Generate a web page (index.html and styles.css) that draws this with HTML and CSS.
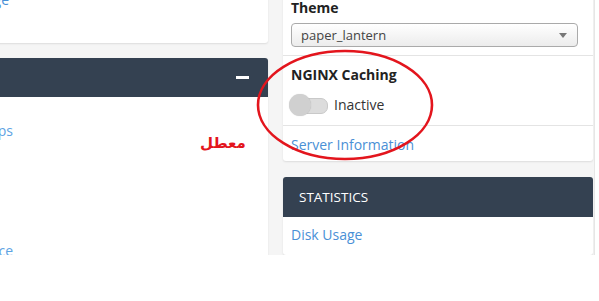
FILE: index.html
```html
<!DOCTYPE html>
<html lang="en">

<head>
  <meta charset="UTF-8">
  <meta name="viewport" content="width=device-width, initial-scale=1.0">
  <title>cPanel - General Information</title>
  <link rel="stylesheet" href="styles.css">
</head>

<body>
  <div class="page">
    <!-- Left column: tool groups -->
    <div class="col col-left">
      <div class="card card-top">
        <div class="item"><a href="#" class="link">Disk Usage</a></div>
      </div>

      <div class="panel panel-left">
        <div class="panel-heading">
          <span class="collapse-icon"></span>
        </div>
        <div class="panel-body tools">
          <div class="item"><a href="#" class="link link-light">Apps</a></div>
          <div class="item"><a href="#" class="link link-light">Workspace</a></div>
        </div>
      </div>
    </div>

    <!-- Right column: general information + statistics -->
    <div class="col col-right">
      <div class="card info">
        <div class="info-row">
          <label class="info-label">Theme</label>
          <div class="select">
            <span>paper_lantern</span>
            <span class="select-arrow"></span>
          </div>
        </div>
        <div class="info-row">
          <div class="info-label">NGINX Caching</div>
          <div class="toggle-row">
            <span class="toggle"><span class="toggle-knob"></span></span>
            <span class="toggle-text">Inactive</span>
          </div>
        </div>
        <div class="info-row info-last">
          <a href="#" class="link">Server Information</a>
        </div>
      </div>

      <div class="panel panel-stats">
        <div class="panel-heading">
          <span class="panel-title">Statistics</span>
        </div>
        <div class="panel-body stats">
          <a href="#" class="link">Disk Usage</a>
        </div>
      </div>
    </div>
  </div>

  <!-- Annotation drawn over the screenshot -->
  <div class="note" lang="ar" dir="rtl">معطل</div>
  <svg class="circle-mark" width="200" height="130" viewBox="0 0 200 130">
    <ellipse cx="89" cy="56" rx="87" ry="54" fill="none" stroke="#e3151d" stroke-width="2.6" />
  </svg>
</body>

</html>
```

FILE: styles.css
```css
/* General Reset */
* {
  margin: 0;
  padding: 0;
  box-sizing: border-box;
}

body {
  font-family: 'Open Sans', 'Noto Sans', sans-serif;
  font-size: 14px;
  line-height: 20px;
  color: #333;
  background-color: #fff;
  position: relative;
  overflow: hidden;
}

/* Grey page area */
.page {
  display: flex;
  gap: 15px;
  width: 627px;
  height: 265px;
  margin-top: -10px;
  margin-left: -32px;
  padding-right: 1px;
  border-right: 1px solid #e6e6e6;
  background-color: #f5f5f5;
  overflow: hidden;
}

.col {
  display: flex;
  flex-direction: column;
}

.col-left {
  width: 300px;
}

.col-right {
  width: 310px;
}

/* Cards */
.card,
.panel {
  background-color: #fff;
  border-radius: 3px;
  box-shadow: 0 1px 2px rgba(0, 0, 0, 0.1);
  flex-shrink: 0;
}

.card-top {
  height: 53px;
}

.link {
  color: #4a90d6;
  text-decoration: none;
}

.link-light {
  color: #5da3e3;
}

/* Names of the tools, only their ends are visible */
.item {
  display: flex;
  justify-content: flex-end;
  width: 41px;
  white-space: nowrap;
}

/* Panels with dark heading */
.panel {
  display: flex;
  flex-direction: column;
  flex-grow: 1;
  min-height: 0;
}

.panel-left {
  margin-top: 15px;
}

.panel-stats {
  margin-top: 16px;
}

.panel-heading {
  display: flex;
  align-items: center;
  justify-content: space-between;
  height: 40px;
  flex-shrink: 0;
  padding: 0 19px 0 16px;
  background-color: #344151;
  border-radius: 3px 3px 0 0;
  color: #fff;
}

.panel-left .panel-heading {
  height: 39px;
  justify-content: flex-end;
}

.collapse-icon {
  width: 13px;
  height: 3px;
  background-color: #fff;
}

.panel-title {
  text-transform: uppercase;
  font-size: 13.5px;
}

.panel-body {
  padding: 8px;
}

.tools {
  padding: 24px 0 0;
  display: flex;
  flex-direction: column;
  gap: 100px;
}

.tools .item {
  width: 45px;
}

/* General information card */
.info-row {
  padding: 9px 8px 8px;
  border-bottom: 1px solid #e4e4e4;
}

.info-row:first-child {
  padding-top: 8px;
}

.info-last {
  border-bottom: none;
  padding-bottom: 6px;
}

.info-label {
  display: block;
  font-weight: bold;
  color: #222;
}

.select {
  display: flex;
  align-items: center;
  justify-content: space-between;
  width: 287px;
  height: 24px;
  margin-top: 5px;
  padding: 0 9px;
  font-size: 13px;
  color: #444;
  border: 1px solid #aaa;
  border-radius: 4px;
  background: linear-gradient(#fff, #ececec);
}

.select-arrow {
  width: 0;
  height: 0;
  border-left: 4px solid transparent;
  border-right: 4px solid transparent;
  border-top: 5px solid #777;
  margin-right: 1px;
}

/* Switch */
.toggle-row {
  display: flex;
  align-items: center;
  gap: 8px;
  height: 22px;
  margin-top: 9px;
  margin-bottom: 1px;
}

.toggle {
  position: relative;
  width: 37px;
  height: 22px;
  margin-left: -2px;
}

.toggle::before {
  content: '';
  position: absolute;
  left: 10px;
  top: 4px;
  width: 27px;
  height: 14px;
  border-radius: 7px;
  background-color: #dcdcdc;
  border: 1px solid #c9c9c9;
}

.toggle-knob {
  position: absolute;
  left: 0;
  top: 0;
  width: 22px;
  height: 22px;
  border-radius: 50%;
  background-color: #d0d0d0;
  box-shadow: 0 0 1px rgba(0, 0, 0, 0.2);
}

.toggle-text {
  color: #333;
}

.stats {
  padding-top: 8px;
}

/* Red annotation on top of the screenshot */
.note {
  position: absolute;
  left: 200px;
  top: 131px;
  font-family: 'DejaVu Sans', sans-serif;
  font-size: 15px;
  font-weight: bold;
  line-height: 24px;
  color: #e3151d;
}

.circle-mark {
  position: absolute;
  left: 256px;
  top: 49px;
}
```
